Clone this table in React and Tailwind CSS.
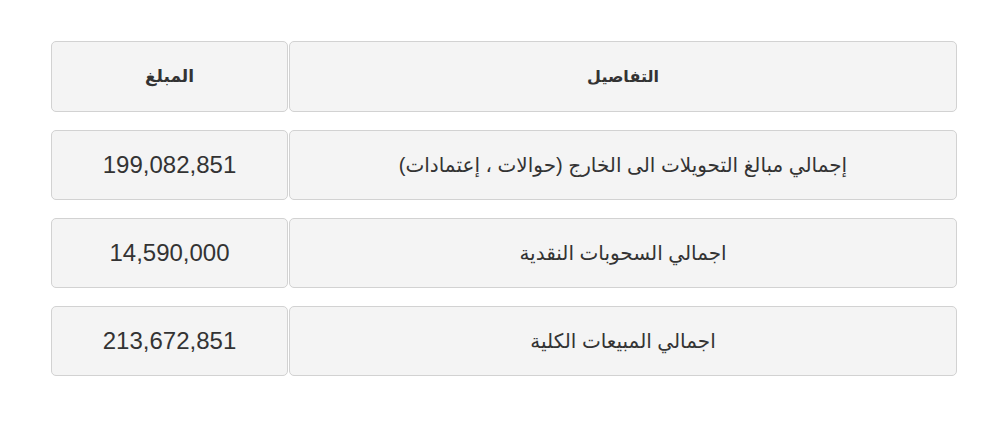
import React from 'react';

const rows = [
  { details: 'إجمالي مبالغ التحويلات الى الخارج (حوالات ، إعتمادات)', amount: '199,082,851' },
  { details: 'اجمالي السحوبات النقدية', amount: '14,590,000' },
  { details: 'اجمالي المبيعات الكلية', amount: '213,672,851' },
];

function Cell({ className = '', children }) {
  return (
    <div
      className={`flex items-center justify-center bg-[#f4f4f4] border border-[#d2d2d2] rounded-[5px] text-[#333] ${className}`}
    >
      {children}
    </div>
  );
}

export default function App() {
  return (
    <div className="min-h-[425px] bg-white pt-[41px]" style={{ fontFamily: '"Liberation Sans", "DejaVu Sans", Arial, sans-serif' }}>
      <div dir="rtl" className="ml-[51px] w-[906px] flex flex-col gap-[18px]">
        <div className="flex gap-[1px] h-[71px]">
          <Cell className="w-[668px] text-[16px] font-bold">التفاصيل</Cell>
          <Cell className="flex-1 text-[17px] font-bold">المبلغ</Cell>
        </div>
        {rows.map(r => (
          <div key={r.amount} className="flex gap-[1px] h-[70px]">
            <Cell className="w-[668px] text-[20px]">{r.details}</Cell>
            <Cell className="flex-1 text-[24px]">
              <span dir="ltr">{r.amount}</span>
            </Cell>
          </div>
        ))}
      </div>
    </div>
  );
}
